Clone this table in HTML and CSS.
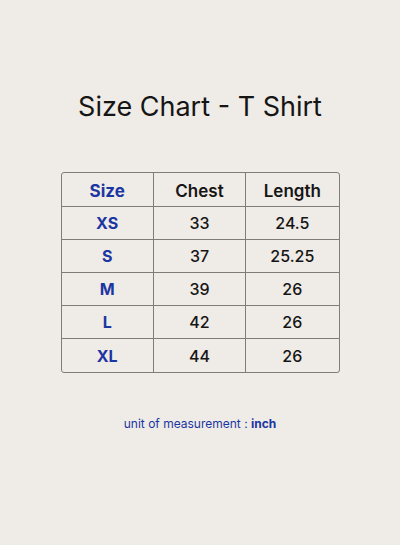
FILE: index.html
```html
<!DOCTYPE html>
<html>
<head>
<meta charset="utf-8">
<link rel="stylesheet" href="styles.css">
</head>
<body>
<main class="page">
  <h1 class="title">Size Chart - T Shirt</h1>
  <table class="chart">
    <thead>
      <tr><th class="size">Size</th><th>Chest</th><th>Length</th></tr>
    </thead>
    <tbody>
      <tr><td class="size">XS</td><td>33</td><td>24.5</td></tr>
      <tr><td class="size">S</td><td>37</td><td>25.25</td></tr>
      <tr><td class="size">M</td><td>39</td><td>26</td></tr>
      <tr><td class="size">L</td><td>42</td><td>26</td></tr>
      <tr><td class="size">XL</td><td>44</td><td>26</td></tr>
    </tbody>
  </table>
  <p class="note">unit of measurement : <strong>inch</strong></p>
</main>
</body>
</html>
```
FILE: styles.css
```css
html, body {
  margin: 0;
  padding: 0;
  background: #efebe6;
}
.page {
  width: 400px;
  height: 545px;
  display: flex;
  flex-direction: column;
  align-items: center;
  font-family: Inter, "Noto Sans", sans-serif;
  color: #151515;
}
.title {
  margin: 89px 0 0;
  font-size: 27px;
  font-weight: 400;
  line-height: 35px;
  letter-spacing: 0;
}
.chart {
  margin-top: 48px;
  width: 279px;
  border-collapse: separate;
  border-spacing: 0;
  border: 1px solid #7f7d79;
  border-radius: 3px;
  table-layout: fixed;
}
.chart th, .chart td {
  height: 32.1px;
  padding: 0;
  text-align: center;
  border-right: 1px solid #7f7d79;
  border-bottom: 1px solid #7f7d79;
  font-size: 16px;
  font-weight: 500;
}
.chart th {
  font-size: 17px;
  font-weight: 600;
  padding-top: 2px;
  height: 31.1px;
}
.chart tr > :last-child { border-right: none; }
.chart tbody tr:last-child td { border-bottom: none; }
.size { color: #1b36a3; font-weight: 700 !important; }
.note {
  margin: 43px 0 0;
  font-size: 12px;
  color: #1b36a3;
}
.note strong { font-weight: 700; }
```
